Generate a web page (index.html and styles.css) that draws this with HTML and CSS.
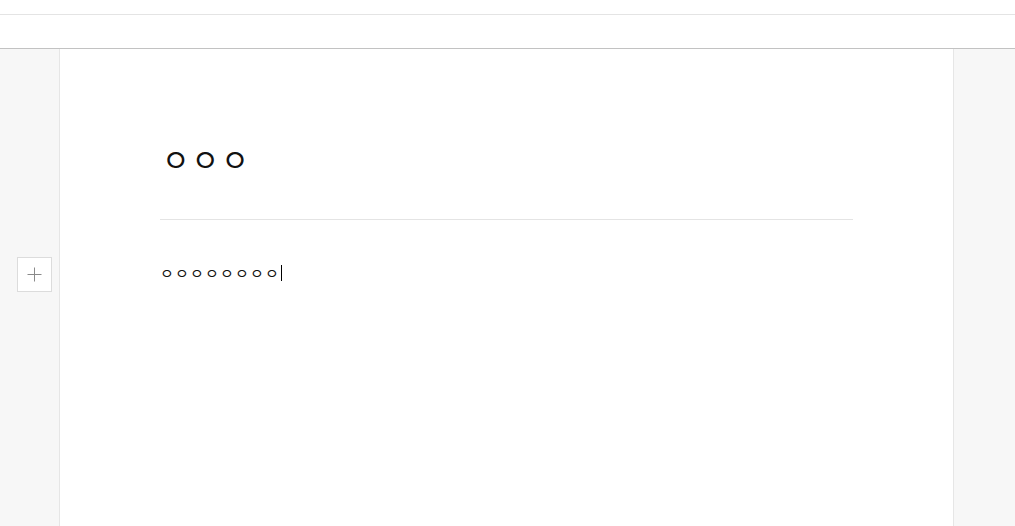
FILE: index.html
```html
<!DOCTYPE html>
<html lang="ko">
<head>
  <meta charset="UTF-8">
  <title>에디터</title>
  <link rel="stylesheet" href="styles.css">
</head>
<body>

  <div class="topbar"></div>
  <div class="toolbar"></div>

  <div class="workspace">
    <div class="gutter">
      <button class="add-btn" aria-label="추가">
        <svg width="15" height="15" viewBox="0 0 15 15">
          <path d="M7.5 0.5v14M0.5 7.5h14" stroke="#8a8a8a" stroke-width="1" fill="none"/>
        </svg>
      </button>
    </div>

    <div class="page">
      <div class="title">ㅇㅇㅇ</div>
      <div class="title-line"></div>
      <p class="text">ㅇㅇㅇㅇㅇㅇㅇㅇ<span class="caret"></span></p>
    </div>

    <div class="gutter"></div>
  </div>

</body>
</html>
```

FILE: styles.css
```css
body {
  margin: 0;
  padding: 0;
  background: #f7f7f7;
  font-family: "Noto Sans CJK KR", "Noto Sans", sans-serif;
  color: #111;
}

.topbar {
  height: 14px;
  background: #fff;
  border-bottom: 1px solid #e4e4e4;
}

.toolbar {
  height: 33px;
  background: #fff;
  border-bottom: 1px solid #c2c2c2;
}

.workspace {
  display: grid;
  grid-template-columns: 59px 895px 1fr;
  min-height: 477px;
}

.gutter {
  padding: 208px 0 0 17px;
}

.add-btn {
  width: 35px;
  height: 35px;
  padding: 0;
  background: #fff;
  border: 1px solid #dcdcdc;
  display: flex;
  align-items: center;
  justify-content: center;
  cursor: pointer;
}

.page {
  background: #fff;
  border-left: 1px solid #e6e6e6;
  border-right: 1px solid #e6e6e6;
  padding: 90px 100px 0;
}

.title {
  font-size: 30px;
  line-height: 38px;
  height: 38px;
  padding: 0 0 42px 2px;
  letter-spacing: 2px;
}

.title-line {
  height: 1px;
  background: #e4e4e4;
}

.text {
  margin: 41px 0 0;
  font-size: 15px;
  line-height: 24px;
  letter-spacing: 1.2px;
  display: flex;
  align-items: center;
}

.caret {
  display: inline-block;
  width: 1px;
  height: 16px;
  margin-left: 1px;
  background: #000;
}
```
